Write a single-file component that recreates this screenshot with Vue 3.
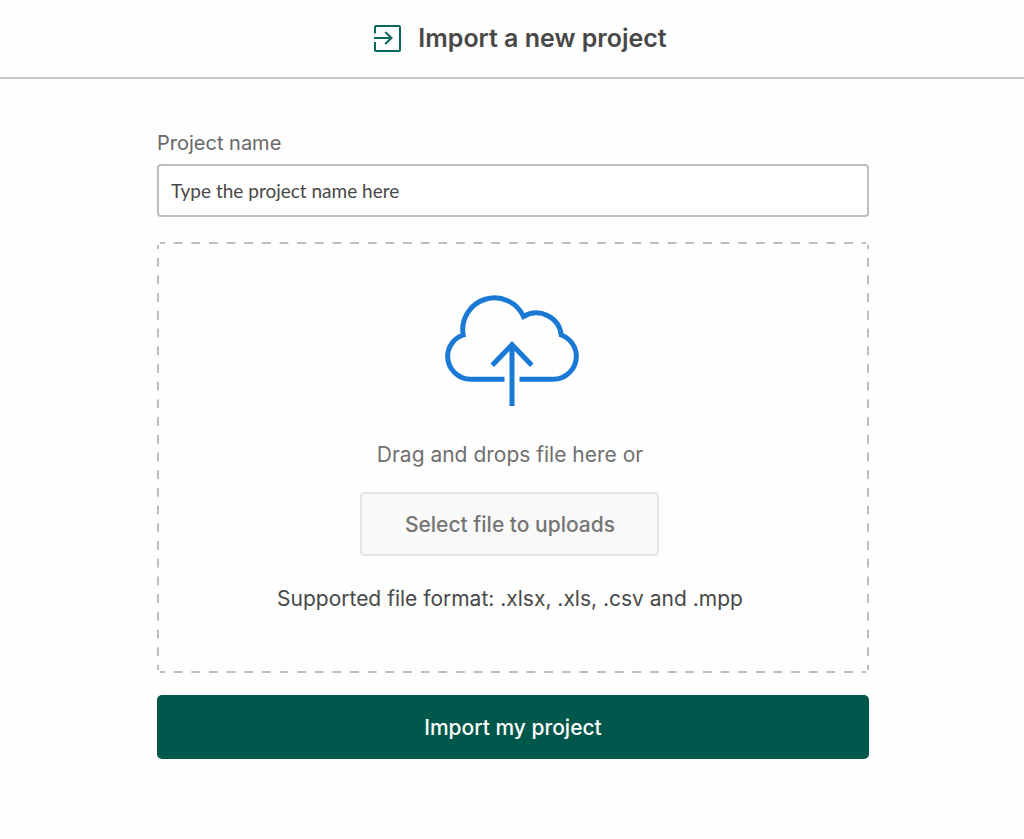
<script setup>
import { ref } from 'vue'

const projectName = ref('')
const picker = ref(null)
</script>

<template>
  <div class="page">
    <header class="header">
      <svg class="header-icon" viewBox="0 0 28 28" aria-hidden="true">
        <path d="M2 9.5V3A1 1 0 0 1 3 2H26A1 1 0 0 1 27 3V26A1 1 0 0 1 26 27H3A1 1 0 0 1 2 26V18" />
        <path d="M1 14H18.5M12.2 8L18.5 14L12.2 20" />
      </svg>
      <h1>Import a new project</h1>
    </header>
    <main class="content">
      <form class="form" @submit.prevent>
        <label class="label" for="project-name">Project name</label>
        <input id="project-name" v-model="projectName" class="field" type="text" placeholder="Type the project name here" />
        <section class="dropzone" @dragover.prevent @drop.prevent>
          <svg class="cloud" viewBox="0 0 136 112" aria-hidden="true">
            <path d="M60.5 85.3H27A23.3 23.3 0 0 1 3.6 62A23 23 0 0 1 19.2 41A31.8 31.8 0 0 1 79.5 22.5A25 25 0 0 1 117.2 41A23 23 0 0 1 132.4 62A23.3 23.3 0 0 1 109 85.3H75.5" />
            <path d="M68 112V50M48.2 71.3L68 50.7L87.8 71.3" />
          </svg>
          <div class="choices">
            <p class="hint">Drag and drops file here or</p>
            <button class="select" type="button" @click="picker.click()">Select file to uploads</button>
            <input ref="picker" type="file" accept=".xlsx,.xls,.csv,.mpp" aria-label="Project file" hidden />
            <p class="formats">Supported file format: .xlsx, .xls, .csv and .mpp</p>
          </div>
        </section>
        <button class="submit" type="submit">Import my project</button>
      </form>
    </main>
  </div>
</template>

<style>
body {
  background: #fefefe;
}
</style>

<style scoped>
.page {
  font-family: Inter, "Liberation Sans", sans-serif;
  color: #484848;
}
.header {
  display: flex;
  align-items: center;
  justify-content: center;
  gap: 17px;
  padding: 20px 0 21px 16px;
  border-bottom: 2px solid #c8c8c8;
}
.header-icon {
  width: 28px;
  height: 28px;
  fill: none;
  stroke: #07695d;
  stroke-width: 2;
}
h1 {
  margin: 0;
  font-size: 25px;
  line-height: 36px;
  font-weight: 600;
}
.content {
  padding: 49px 0 40px 2px;
}
.form {
  display: flex;
  flex-direction: column;
  max-width: 712px;
  margin: 0 auto;
}
.label {
  font-size: 20px;
  line-height: 30px;
  color: #686868;
  margin-bottom: 6px;
}
.field {
  box-sizing: border-box;
  height: 53px;
  padding: 0 12px;
  border: 2px solid #bebebe;
  border-radius: 4px;
  background: #fff;
  font-family: Lato, sans-serif;
  font-size: 19px;
  color: #484848;
}
.field::placeholder {
  color: #484848;
  opacity: 1;
}
.dropzone {
  position: relative;
  display: flex;
  flex-direction: column;
  align-items: center;
  margin: 25px 0 22px;
  padding: 52px 0 58px;
}
.dropzone::before,
.dropzone::after {
  content: "";
  position: absolute;
  pointer-events: none;
}
.dropzone::before {
  inset: 0 3px;
  background-image:
    linear-gradient(90deg, #bdbdbd 25%, transparent 25% 75%, #bdbdbd 75%),
    linear-gradient(90deg, #bdbdbd 25%, transparent 25% 75%, #bdbdbd 75%);
  background-size: 2.5% 2px;
  background-position: 0 0, 0 100%;
  background-repeat: repeat-x;
}
.dropzone::after {
  inset: 3px 0;
  background-image:
    linear-gradient(#bdbdbd 25%, transparent 25% 75%, #bdbdbd 75%),
    linear-gradient(#bdbdbd 25%, transparent 25% 75%, #bdbdbd 75%);
  background-size: 2px 18px;
  background-position: 0 0, 100% 0;
  background-repeat: no-repeat round;
}
.cloud {
  width: 136px;
  height: 112px;
  margin-right: 2px;
  fill: none;
  stroke: #1b79d6;
  stroke-width: 5;
}
.choices {
  display: flex;
  flex-direction: column;
  align-items: center;
  padding-right: 6px;
}
.hint,
.formats {
  margin: 0;
  font-size: 21px;
  line-height: 32px;
}
.hint {
  margin: 33px 0 21px;
  color: #707070;
}
.select,
.submit {
  height: 64px;
  padding: 2px 0 0;
  font: 500 21px/32px Inter, sans-serif;
}
.select {
  width: 299px;
  border: 2px solid #e5e5e5;
  border-radius: 4px;
  background: #f9f9f9;
  color: #757575;
}
.formats {
  margin-top: 27px;
}
.submit {
  border: 0;
  border-radius: 5px;
  background: #00574b;
  color: #fff;
}
</style>
